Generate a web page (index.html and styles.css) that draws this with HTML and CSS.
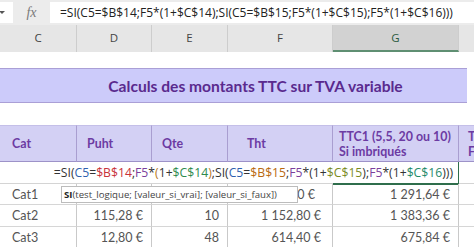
FILE: index.html
```html
<!DOCTYPE html>
<html>
<head>
    <title>Calculs TTC</title>
    <link rel="stylesheet" href="styles.css">
</head>
<body>
    <div class="sheet">
        <div class="formula-bar">
            <div class="name-box"><span class="caret"></span></div>
            <div class="fx">fx</div>
            <div class="formula-input">=SI(C5=$B$14;F5*(1+$C$14);SI(C5=$B$15;F5*(1+$C$15);F5*(1+$C$16)))</div>
        </div>

        <div class="col-heads">
            <div class="col-head">C</div>
            <div class="col-head">D</div>
            <div class="col-head">E</div>
            <div class="col-head">F</div>
            <div class="col-head active">G</div>
            <div class="col-head last"></div>
        </div>

        <div class="spacer-top"></div>
        <div class="title-row">Calculs des montants TTC sur TVA variable</div>
        <div class="spacer-mid"></div>

        <div class="table">
            <div class="th">Cat</div>
            <div class="th">Puht</div>
            <div class="th">Qte</div>
            <div class="th th-tht">Tht</div>
            <div class="th th-ttc">TTC1 (5,5, 20 ou 10)<br>Si imbriqués</div>
            <div class="th th-next">T<br>F</div>

            <div class="edit-row">
                <div class="edit-text">=SI(<span class="r1">C5</span>=<span class="r2">$B$14</span>;<span class="r3">F5</span>*<span class="p1">(</span>1+<span class="r4">$C$14</span><span class="p1">)</span>;SI(<span class="r1">C5</span>=<span class="r5">$B$15</span>;<span class="r3">F5</span>*(1+<span class="r6">$C$15</span>);<span class="r3">F5</span>*(1+<span class="r7">$C$16</span>)))</div>
                <div class="edit-cell"></div>
            </div>

            <div class="td name">Cat1</div>
            <div class="td">107,63 €</div>
            <div class="td">10</div>
            <div class="td cut">1 076,30 €</div>
            <div class="td">1 291,64 €</div>
            <div class="td blank"></div>

            <div class="td name">Cat2</div>
            <div class="td">115,28 €</div>
            <div class="td">10</div>
            <div class="td wide">1 152,80 €</div>
            <div class="td">1 383,36 €</div>
            <div class="td blank"></div>

            <div class="td name">Cat3</div>
            <div class="td">12,80 €</div>
            <div class="td">48</div>
            <div class="td wide">614,40 €</div>
            <div class="td">675,84 €</div>
            <div class="td blank"></div>
        </div>

        <div class="tooltip"><b>SI</b>(test_logique; [valeur_si_vrai]; [valeur_si_faux])</div>
    </div>
</body>
</html>
```

FILE: styles.css
```css
* {
    box-sizing: border-box;
    margin: 0;
    padding: 0;
}

body {
    width: 474px;
    height: 247px;
    overflow: hidden;
    background: #ffffff;
    font-family: Lato, "Liberation Sans", sans-serif;
}

.sheet {
    position: relative;
}

/* formula bar */
.formula-bar {
    display: flex;
    align-items: center;
    height: 25px;
    padding: 2px 0;
    background: #ececec;
}

.name-box {
    width: 13px;
    height: 21px;
    background: #ffffff;
    display: flex;
    align-items: center;
}

.caret {
    width: 0;
    height: 0;
    border-left: 3px solid transparent;
    border-right: 3px solid transparent;
    border-top: 3px solid #555555;
    margin-left: -1px;
}

.fx {
    width: 37px;
    text-align: center;
    font-family: "Liberation Serif", serif;
    font-style: italic;
    font-size: 14px;
    color: #7a7a7a;
}

.formula-input {
    flex: 1;
    height: 21px;
    background: #ffffff;
    padding-left: 10px;
    font-family: "Open Sans", sans-serif;
    font-size: 12px;
    line-height: 21px;
    color: #222222;
    white-space: nowrap;
    overflow: hidden;
}

/* column letters */
.col-heads {
    display: grid;
    grid-template-columns: 77px 75px 76px 105px 126px 1fr;
    height: 27px;
    background: #e6e6e6;
}

.col-head {
    border-right: 1px solid #cdcdcd;
    text-align: center;
    line-height: 26px;
    font-family: "Open Sans", sans-serif;
    font-size: 11.5px;
    color: #444444;
}

.col-head.active {
    background: #d2d2d2;
    color: #2c5a40;
    border-bottom: 2px solid #5f8f72;
    line-height: 25px;
}

.col-head.last {
    border-right: none;
}

.spacer-top {
    height: 16px;
}

.title-row {
    width: 467px;
    height: 35px;
    display: flex;
    align-items: center;
    justify-content: center;
    padding-left: 44px;
    background: #cccbfa;
    border-top: 1px solid #aa9fd6;
    border-bottom: 1px solid #aa9fd6;
    font-weight: 700;
    font-size: 15.6px;
    color: #5a2a8e;
}

.spacer-mid {
    height: 22px;
}

/* table */
.table {
    display: grid;
    grid-template-columns: 77px 75px 76px 105px 126px 15px;
    grid-template-rows: 37px 22px 21px 22px 22px;
}

.th {
    display: flex;
    align-items: center;
    padding-left: 10px;
    background: #d3d0f4;
    border-top: 1px solid #c4bfe8;
    border-right: 1px solid #a99ed0;
    border-bottom: 1px solid #9d92c8;
    font-weight: 700;
    font-size: 12.4px;
    line-height: 15px;
    color: #6c3ba3;
    white-space: nowrap;
    overflow: hidden;
}

.th:first-child {
    padding-left: 12px;
}

.th-tht {
    padding-left: 19px;
}

.th-ttc {
    padding-left: 6px;
}

.th-next {
    padding-left: 9px;
    border-right: none;
}

.edit-row {
    grid-column: 1 / -1;
    display: grid;
    grid-template-columns: 77px 75px 76px 105px 126px 15px;
    border-bottom: 1px solid #d4d4d4;
}

.edit-text {
    grid-column: 1 / 6;
    grid-row: 1;
    text-align: right;
    padding-right: 6px;
    font-family: "Open Sans", sans-serif;
    font-size: 12.2px;
    line-height: 21px;
    color: #333333;
    white-space: nowrap;
}

.edit-cell {
    grid-column: 5;
    grid-row: 1;
    border-right: 1px solid #2f6e4c;
    border-bottom: 2px solid #2f6e4c;
    margin-bottom: -2px;
}

.r1 { color: #2f5fae; }
.r2 { color: #c8323a; }
.r3 { color: #7b3f9c; }
.r4 { color: #2e8a4e; }
.r5 { color: #b8690f; }
.r6 { color: #7a8a1e; }
.r7 { color: #1f8a6a; }
.p1 { color: #b87a22; }

.td {
    padding-right: 8px;
    text-align: right;
    border-right: 1px solid #c9c9c9;
    border-bottom: 1px solid #d6d6d6;
    font-size: 12.5px;
    line-height: 21px;
    color: #555555;
    white-space: nowrap;
}

.td.name {
    text-align: left;
    padding-left: 12px;
}

.td.wide {
    padding-right: 11px;
}

.td.cut {
    padding-right: 17px;
}

.td.blank {
    border-right: none;
}

/* function hint */
.tooltip {
    position: absolute;
    left: 61px;
    top: 186px;
    width: 237px;
    height: 17px;
    padding-left: 2px;
    background: #ffffff;
    border: 1px solid #bcbcbc;
    font-family: "Open Sans", sans-serif;
    font-size: 9.6px;
    line-height: 15px;
    color: #444444;
    white-space: nowrap;
}

.tooltip b {
    color: #222222;
}
```
